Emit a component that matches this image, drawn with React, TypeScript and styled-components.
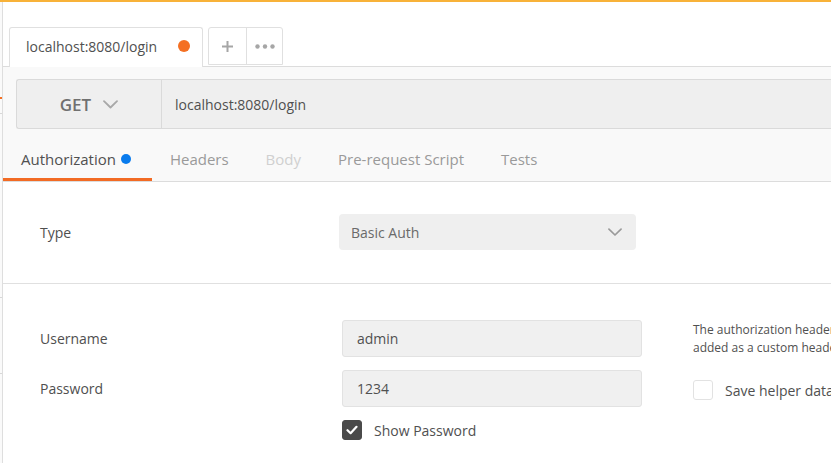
import React from "react";
import styled, { createGlobalStyle } from "styled-components";

const GlobalStyle = createGlobalStyle`
  html, body {
    margin: 0;
    padding: 0;
    background: #ffffff;
    overflow: hidden;
  }
  body {
    font-family: "Open Sans", "Noto Sans", "Liberation Sans", sans-serif;
    color: #505050;
  }
  * { box-sizing: border-box; }
`;

const Shell = styled.div`
  width: 831px;
  height: 463px;
  display: flex;
  flex-direction: column;
  overflow: hidden;
`;

const AccentBar = styled.div`
  height: 2px;
  background: #f8b239;
  flex: none;
`;

const Body = styled.div`
  flex: 1;
  display: flex;
  min-height: 0;
`;

const SideEdge = styled.div`
  width: 3px;
  flex: none;
  background: linear-gradient(to right, #fafafa 0, #fafafa 2px, #dedede 2px);
  position: relative;
`;

const SideMark = styled.div<{ $top: number; $color: string; $h: number }>`
  position: absolute;
  left: 0;
  width: 2px;
  top: ${(p) => p.$top}px;
  height: ${(p) => p.$h}px;
  background: ${(p) => p.$color};
`;

const Main = styled.div`
  flex: 1;
  display: flex;
  flex-direction: column;
  min-width: 0;
  overflow: hidden;
`;

/* ---------- request tabs strip ---------- */

const TabStrip = styled.div`
  height: 65px;
  flex: none;
  display: flex;
  align-items: flex-end;
  gap: 5px;
  padding-left: 6px;
  border-bottom: 1px solid #dcdcdc;
  background: #ffffff;
`;

const RequestTab = styled.div`
  width: 194px;
  height: 40px;
  margin-bottom: -1px;
  display: flex;
  align-items: center;
  justify-content: space-between;
  padding: 0 12px 3px 16px;
  border: 1px solid #e0e0e0;
  border-bottom: none;
  border-radius: 3px 3px 0 0;
  background: #ffffff;
  font-size: 14px;
  color: #505050;
`;

const Dot = styled.span<{ $color: string; $size: number }>`
  display: inline-block;
  width: ${(p) => p.$size}px;
  height: ${(p) => p.$size}px;
  border-radius: 50%;
  background: ${(p) => p.$color};
  flex: none;
`;

const TabActions = styled.div`
  height: 38px;
  margin-bottom: 1px;
  display: flex;
  border: 1px solid #e0e0e0;
  border-radius: 3px 3px 0 0;
  background: #ffffff;
`;

const TabAction = styled.div<{ $width: number; $divided?: boolean }>`
  width: ${(p) => p.$width}px;
  display: flex;
  align-items: center;
  justify-content: center;
  color: #a0a0a0;
  border-right: ${(p) => (p.$divided ? "1px solid #e0e0e0" : "none")};
`;

/* ---------- request builder ---------- */

const Builder = styled.div`
  flex: none;
  background: #f9f9f9;
  padding-top: 12px;
  border-bottom: 1px solid #dcdcdc;
`;

const UrlBar = styled.div`
  margin-left: 13px;
  height: 50px;
  display: flex;
  background: #efefef;
  border: 1px solid #dadada;
  border-right: none;
  border-radius: 3px 0 0 3px;
`;

const MethodPicker = styled.div`
  width: 145px;
  flex: none;
  display: flex;
  align-items: center;
  justify-content: center;
  gap: 12px;
  border-right: 1px solid #dadada;
  font-size: 17px;
  font-weight: 600;
  color: #707070;
`;

const UrlText = styled.div`
  flex: 1;
  display: flex;
  align-items: center;
  padding-left: 13px;
  font-size: 14px;
  color: #505050;
`;

const SectionTabs = styled.div`
  height: 52px;
  display: flex;
  align-items: stretch;
`;

const SectionTab = styled.div<{ $active?: boolean; $tone: string }>`
  display: flex;
  align-items: center;
  gap: 5px;
  padding: 11px ${(p) => (p.$active ? 21 : 19)}px 0 18px;
  font-size: 15px;
  color: ${(p) => p.$tone};
  border-bottom: 3px solid ${(p) => (p.$active ? "#f26b24" : "transparent")};
`;

/* ---------- auth form ---------- */

const Content = styled.div`
  flex: 1;
  background: #ffffff;
`;

const TypeSection = styled.div`
  display: grid;
  grid-template-columns: 299px 297px;
  align-items: center;
  padding: 32px 0 33px 37px;
  border-bottom: 1px solid #e0e0e0;
`;

const Label = styled.div`
  font-size: 14px;
  color: #4f4f4f;
`;

const Select = styled.div`
  height: 36px;
  display: flex;
  align-items: center;
  justify-content: space-between;
  padding: 0 14px 0 12px;
  background: #efefef;
  border-radius: 4px;
  font-size: 14px;
  color: #6a6a6a;
`;

const CredSection = styled.div`
  display: grid;
  grid-template-columns: 302px 300px 1fr;
  grid-template-rows: 37px 37px 20px;
  row-gap: 13px;
  align-items: center;
  padding: 36px 0 0 37px;
`;

const Field = styled.div`
  height: 37px;
  display: flex;
  align-items: center;
  padding-left: 14px;
  background: #f0f0f0;
  border: 1px solid #e2e2e2;
  border-radius: 3px;
  font-size: 14px;
  color: #505050;
`;

const CheckRow = styled.label`
  display: flex;
  align-items: center;
  gap: 12px;
  font-size: 14px;
  color: #505050;
  white-space: nowrap;
`;

const Box = styled.span<{ $checked?: boolean }>`
  width: 20px;
  height: 20px;
  flex: none;
  border-radius: 3px;
  display: flex;
  align-items: center;
  justify-content: center;
  background: ${(p) => (p.$checked ? "#4a4a4a" : "#ffffff")};
  border: 1px solid ${(p) => (p.$checked ? "#4a4a4a" : "#e2e2e2")};
`;

const Help = styled.div`
  padding-left: 51px;
  padding-top: 1px;
  font-size: 12px;
  line-height: 18px;
  color: #505050;
  white-space: nowrap;
  align-self: start;
  overflow: hidden;
`;

const HelperCheck = styled.div`
  padding-left: 51px;
  align-self: start;
  margin-top: 10px;
  overflow: hidden;
`;

const Chevron = ({ size, color }: { size: number; color: string }) => (
  <svg width={size} height={size * 0.6} viewBox="0 0 15 9" fill="none">
    <path d="M1 1.2 7.5 7.5 14 1.2" stroke={color} strokeWidth="1.8" strokeLinecap="round" strokeLinejoin="round" />
  </svg>
);

const Check = () => (
  <svg width="12" height="10" viewBox="0 0 12 10" fill="none">
    <path d="M1.5 5.2 4.6 8.2 10.5 1.8" stroke="#ffffff" strokeWidth="2.2" strokeLinecap="round" strokeLinejoin="round" />
  </svg>
);

const Plus = () => (
  <svg width="11" height="11" viewBox="0 0 11 11">
    <path d="M5.5 0v11M0 5.5h11" stroke="#a6a6a6" strokeWidth="2" />
  </svg>
);

const Ellipsis = () => (
  <svg width="20" height="5" viewBox="0 0 20 5">
    <circle cx="2.5" cy="2.5" r="2.2" fill="#a6a6a6" />
    <circle cx="10" cy="2.5" r="2.2" fill="#a6a6a6" />
    <circle cx="17.5" cy="2.5" r="2.2" fill="#a6a6a6" />
  </svg>
);

const sections = [
  { name: "Authorization", tone: "#505050", active: true },
  { name: "Headers", tone: "#9a9a9a" },
  { name: "Body", tone: "#d0d0d0" },
  { name: "Pre-request Script", tone: "#9a9a9a" },
  { name: "Tests", tone: "#9a9a9a" },
];

export default function App() {
  return (
    <Shell>
      <GlobalStyle />
      <AccentBar />
      <Body>
        <SideEdge>
          <SideMark $top={95} $h={2} $color="#f47023" />
          <SideMark $top={111} $h={1} $color="#d8d8d8" />
          <SideMark $top={295} $h={1} $color="#d8d8d8" />
          <SideMark $top={371} $h={1} $color="#d8d8d8" />
        </SideEdge>
        <Main>
          <TabStrip>
            <RequestTab>
              <span>localhost:8080/login</span>
              <Dot $color="#f47023" $size={12} />
            </RequestTab>
            <TabActions>
              <TabAction $width={38} $divided>
                <Plus />
              </TabAction>
              <TabAction $width={35}>
                <Ellipsis />
              </TabAction>
            </TabActions>
          </TabStrip>

          <Builder>
            <UrlBar>
              <MethodPicker>
                <span>GET</span>
                <Chevron size={15} color="#a8a8a8" />
              </MethodPicker>
              <UrlText>localhost:8080/login</UrlText>
            </UrlBar>
            <SectionTabs>
              {sections.map((s) => (
                <SectionTab key={s.name} $active={s.active} $tone={s.tone}>
                  <span>{s.name}</span>
                  {s.active && <Dot $color="#097bed" $size={10} />}
                </SectionTab>
              ))}
            </SectionTabs>
          </Builder>

          <Content>
            <TypeSection>
              <Label>Type</Label>
              <Select>
                <span>Basic Auth</span>
                <Chevron size={14} color="#9a9a9a" />
              </Select>
            </TypeSection>

            <CredSection>
              <Label>Username</Label>
              <Field>admin</Field>
              <Help>
                The authorization header will be automatically generated when you send the request.
                <br />
                added as a custom header
              </Help>

              <Label>Password</Label>
              <Field>1234</Field>
              <HelperCheck>
                <CheckRow>
                  <Box />
                  <span>Save helper data to request</span>
                </CheckRow>
              </HelperCheck>

              <span />
              <CheckRow>
                <Box $checked>
                  <Check />
                </Box>
                <span>Show Password</span>
              </CheckRow>
              <span />
            </CredSection>
          </Content>
        </Main>
      </Body>
    </Shell>
  );
}
